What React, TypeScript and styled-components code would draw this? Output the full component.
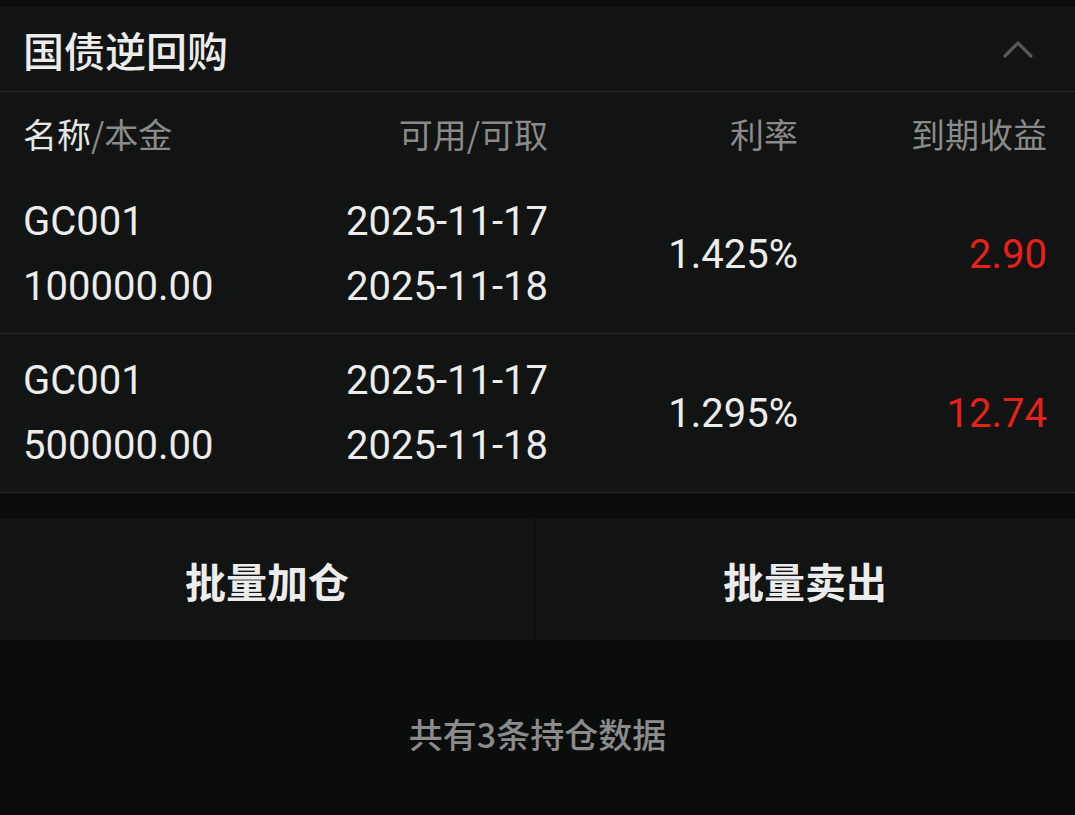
import React from "react";
import styled, { createGlobalStyle } from "styled-components";

const Global = createGlobalStyle`
  html, body { margin: 0; padding: 0; background: #0a0d0b; }
  body { font-family: Roboto, "Noto Sans CJK SC", sans-serif; }
`;

const Page = styled.div`
  width: 1075px;
  min-height: 815px;
  background: #0a0d0b;
  padding-top: 7px;
  box-sizing: border-box;
  display: flex;
  flex-direction: column;
`;

const Card = styled.section`
  background: #111412;
  display: flex;
  flex-direction: column;
`;

const TitleBar = styled.div`
  height: 84px;
  display: flex;
  align-items: center;
  justify-content: space-between;
  padding: 0 42px 0 23px;
  border-bottom: 1px solid #232725;
`;

const Title = styled.h1`
  margin: 0;
  font-family: "Noto Sans CJK SC", sans-serif;
  font-size: 41px;
  font-weight: 500;
  color: #ececec;
  line-height: 1;
`;

const Grid = styled.div<{ $head?: boolean }>`
  display: grid;
  grid-template-columns: 1fr 250px 250px 249px;
  align-items: center;
  padding: 0 28px 0 23px;
  height: ${(p) => (p.$head ? "83px" : "158px")};
  border-bottom: ${(p) => (p.$head ? "none" : "1px solid #232725")};
`;

const HeadCell = styled.div<{ $right?: boolean }>`
  font-family: "Noto Sans CJK SC", sans-serif;
  font-size: 34px;
  color: #8a8a8a;
  text-align: ${(p) => (p.$right ? "right" : "left")};
  line-height: 1;
`;

const Strong = styled.span`
  color: #e6e6e6;
`;

const Stack = styled.div<{ $right?: boolean }>`
  display: flex;
  flex-direction: column;
  align-items: ${(p) => (p.$right ? "flex-end" : "flex-start")};
  gap: 18px;
`;

const Num = styled.div<{ $red?: boolean }>`
  font-family: Roboto, sans-serif;
  font-size: 40px;
  line-height: 47px;
  color: ${(p) => (p.$red ? "#e8201c" : "#ececec")};
  text-align: right;
`;

const Buttons = styled.div`
  margin-top: 26px;
  height: 121px;
  background: #111412;
  display: grid;
  grid-template-columns: 534px 1px 1fr;
`;

const Divider = styled.div`
  background: #090b0a;
`;

const Btn = styled.button`
  border: none;
  background: transparent;
  color: #ececec;
  font-family: "Noto Sans CJK SC", sans-serif;
  font-size: 41px;
  font-weight: 700;
  cursor: pointer;
  padding: 0;
`;

const Footer = styled.div`
  height: 186px;
  display: flex;
  align-items: center;
  justify-content: center;
  font-family: "Noto Sans CJK SC", sans-serif;
  font-size: 34px;
  font-weight: 500;
  color: #8b8b8b;
`;

const Chevron = () => (
  <svg width="30" height="18" viewBox="0 0 30 18" fill="none">
    <path d="M2 16 L15 3 L28 16" stroke="#555856" strokeWidth="3.2" strokeLinecap="round" strokeLinejoin="round" />
  </svg>
);

const rows = [
  { code: "GC001", amount: "100000.00", d1: "2025-11-17", d2: "2025-11-18", rate: "1.425%", gain: "2.90" },
  { code: "GC001", amount: "500000.00", d1: "2025-11-17", d2: "2025-11-18", rate: "1.295%", gain: "12.74" },
];

export default function App() {
  return (
    <>
      <Global />
      <Page>
        <Card>
          <TitleBar>
            <Title>国债逆回购</Title>
            <Chevron />
          </TitleBar>
          <Grid $head>
            <HeadCell>
              <Strong>名称</Strong>/本金
            </HeadCell>
            <HeadCell $right>可用/可取</HeadCell>
            <HeadCell $right>利率</HeadCell>
            <HeadCell $right>到期收益</HeadCell>
          </Grid>
          {rows.map((r, i) => (
            <Grid key={i}>
              <Stack>
                <Num>{r.code}</Num>
                <Num>{r.amount}</Num>
              </Stack>
              <Stack $right>
                <Num>{r.d1}</Num>
                <Num>{r.d2}</Num>
              </Stack>
              <Num>{r.rate}</Num>
              <Num $red>{r.gain}</Num>
            </Grid>
          ))}
        </Card>
        <Buttons>
          <Btn>批量加仓</Btn>
          <Divider />
          <Btn>批量卖出</Btn>
        </Buttons>
        <Footer>共有3条持仓数据</Footer>
      </Page>
    </>
  );
}
